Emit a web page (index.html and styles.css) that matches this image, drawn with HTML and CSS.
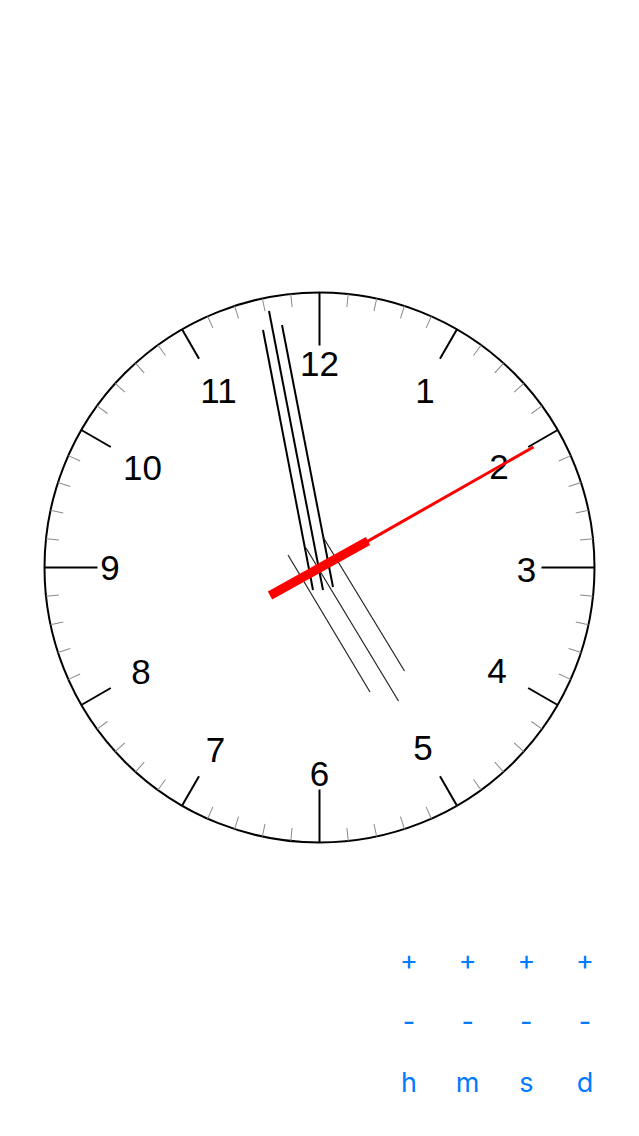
FILE: index.html
```html
<!DOCTYPE html>
<html>
<head>
<meta charset="utf-8">
<link rel="stylesheet" href="styles.css">
</head>
<body>
<div class="page">
  <svg class="clock" width="639" height="930" viewBox="0 0 639 930" xmlns="http://www.w3.org/2000/svg" xmlns:xlink="http://www.w3.org/1999/xlink">
    <defs>
      <line id="mt" class="minor" x1="319.5" y1="292.5" x2="319.5" y2="305.5"/>
      <line id="ht" class="hour" x1="319.5" y1="292.5" x2="319.5" y2="326.5"/>
      <line id="qt" class="hour" x1="319.5" y1="292.5" x2="319.5" y2="345.5"/>
    </defs>
    <circle class="rim" cx="319.5" cy="567.5" r="275"/>
    <g>
      <use href="#mt" transform="rotate(6 319.5 567.5)"/>
      <use href="#mt" transform="rotate(12 319.5 567.5)"/>
      <use href="#mt" transform="rotate(18 319.5 567.5)"/>
      <use href="#mt" transform="rotate(24 319.5 567.5)"/>
      <use href="#mt" transform="rotate(36 319.5 567.5)"/>
      <use href="#mt" transform="rotate(42 319.5 567.5)"/>
      <use href="#mt" transform="rotate(48 319.5 567.5)"/>
      <use href="#mt" transform="rotate(54 319.5 567.5)"/>
      <use href="#mt" transform="rotate(66 319.5 567.5)"/>
      <use href="#mt" transform="rotate(72 319.5 567.5)"/>
      <use href="#mt" transform="rotate(78 319.5 567.5)"/>
      <use href="#mt" transform="rotate(84 319.5 567.5)"/>
      <use href="#mt" transform="rotate(96 319.5 567.5)"/>
      <use href="#mt" transform="rotate(102 319.5 567.5)"/>
      <use href="#mt" transform="rotate(108 319.5 567.5)"/>
      <use href="#mt" transform="rotate(114 319.5 567.5)"/>
      <use href="#mt" transform="rotate(126 319.5 567.5)"/>
      <use href="#mt" transform="rotate(132 319.5 567.5)"/>
      <use href="#mt" transform="rotate(138 319.5 567.5)"/>
      <use href="#mt" transform="rotate(144 319.5 567.5)"/>
      <use href="#mt" transform="rotate(156 319.5 567.5)"/>
      <use href="#mt" transform="rotate(162 319.5 567.5)"/>
      <use href="#mt" transform="rotate(168 319.5 567.5)"/>
      <use href="#mt" transform="rotate(174 319.5 567.5)"/>
      <use href="#mt" transform="rotate(186 319.5 567.5)"/>
      <use href="#mt" transform="rotate(192 319.5 567.5)"/>
      <use href="#mt" transform="rotate(198 319.5 567.5)"/>
      <use href="#mt" transform="rotate(204 319.5 567.5)"/>
      <use href="#mt" transform="rotate(216 319.5 567.5)"/>
      <use href="#mt" transform="rotate(222 319.5 567.5)"/>
      <use href="#mt" transform="rotate(228 319.5 567.5)"/>
      <use href="#mt" transform="rotate(234 319.5 567.5)"/>
      <use href="#mt" transform="rotate(246 319.5 567.5)"/>
      <use href="#mt" transform="rotate(252 319.5 567.5)"/>
      <use href="#mt" transform="rotate(258 319.5 567.5)"/>
      <use href="#mt" transform="rotate(264 319.5 567.5)"/>
      <use href="#mt" transform="rotate(276 319.5 567.5)"/>
      <use href="#mt" transform="rotate(282 319.5 567.5)"/>
      <use href="#mt" transform="rotate(288 319.5 567.5)"/>
      <use href="#mt" transform="rotate(294 319.5 567.5)"/>
      <use href="#mt" transform="rotate(306 319.5 567.5)"/>
      <use href="#mt" transform="rotate(312 319.5 567.5)"/>
      <use href="#mt" transform="rotate(318 319.5 567.5)"/>
      <use href="#mt" transform="rotate(324 319.5 567.5)"/>
      <use href="#mt" transform="rotate(336 319.5 567.5)"/>
      <use href="#mt" transform="rotate(342 319.5 567.5)"/>
      <use href="#mt" transform="rotate(348 319.5 567.5)"/>
      <use href="#mt" transform="rotate(354 319.5 567.5)"/>
    </g>
    <g>
      <use href="#qt"/>
      <use href="#ht" transform="rotate(30 319.5 567.5)"/>
      <use href="#ht" transform="rotate(60 319.5 567.5)"/>
      <use href="#qt" transform="rotate(90 319.5 567.5)"/>
      <use href="#ht" transform="rotate(120 319.5 567.5)"/>
      <use href="#ht" transform="rotate(150 319.5 567.5)"/>
      <use href="#qt" transform="rotate(180 319.5 567.5)"/>
      <use href="#ht" transform="rotate(210 319.5 567.5)"/>
      <use href="#ht" transform="rotate(240 319.5 567.5)"/>
      <use href="#qt" transform="rotate(270 319.5 567.5)"/>
      <use href="#ht" transform="rotate(300 319.5 567.5)"/>
      <use href="#ht" transform="rotate(330 319.5 567.5)"/>
    </g>
    <g class="nums">
      <text x="319.5" y="375.5">12</text>
      <text x="425" y="402.5">1</text>
      <text x="499" y="478.5">2</text>
      <text x="526.5" y="581.5">3</text>
      <text x="497" y="682.5">4</text>
      <text x="423" y="759.5">5</text>
      <text x="319.5" y="786">6</text>
      <text x="215.5" y="761.5">7</text>
      <text x="141" y="683.5">8</text>
      <text x="110" y="579.5">9</text>
      <text x="142.5" y="479.5">10</text>
      <text x="218.5" y="402.5">11</text>
    </g>
    <g>
      <line class="hand" x1="263" y1="330" x2="313" y2="590"/>
      <line class="hand" x1="269" y1="311" x2="323" y2="590"/>
      <line class="hand" x1="282" y1="325" x2="333" y2="587"/>
      <line class="thin" x1="288" y1="555" x2="370" y2="692"/>
      <line class="thin" x1="306" y1="548" x2="398.5" y2="701"/>
      <line class="thin" x1="323" y1="537" x2="404.5" y2="671"/>
      <line class="sec-thick" x1="270" y1="595.5" x2="368" y2="541"/>
      <line class="sec-thin" x1="367" y1="541.6" x2="533.5" y2="447"/>
    </g>
  </svg>
  <div class="controls">
    <button class="btn">+</button>
    <button class="btn">+</button>
    <button class="btn">+</button>
    <button class="btn">+</button>
    <button class="btn">-</button>
    <button class="btn">-</button>
    <button class="btn">-</button>
    <button class="btn">-</button>
    <button class="btn">h</button>
    <button class="btn">m</button>
    <button class="btn">s</button>
    <button class="btn">d</button>
  </div>
</div>
</body>
</html>
```

FILE: styles.css
```css
html, body {
  margin: 0;
  padding: 0;
  background: #ffffff;
}

.page {
  width: 639px;
  height: 1136px;
  overflow: hidden;
}

.clock {
  display: block;
}

.rim {
  fill: none;
  stroke: #000;
  stroke-width: 2;
}

.minor {
  stroke: #8a8a8a;
  stroke-width: 1;
}

.hour {
  stroke: #000;
  stroke-width: 2;
}

.nums text {
  font-family: "Liberation Sans", Arial, sans-serif;
  font-size: 35px;
  fill: #000;
  text-anchor: middle;
}

.hand {
  stroke: #000;
  stroke-width: 2;
}

.thin {
  stroke: #222;
  stroke-width: 1.2;
}

.sec-thick {
  stroke: #ff0000;
  stroke-width: 9;
}

.sec-thin {
  stroke: #ff0000;
  stroke-width: 3;
}

.controls {
  display: grid;
  grid-template-columns: repeat(4, 58.67px);
  grid-auto-rows: 61px;
  justify-content: end;
  padding-right: 24.7px;
}

.btn {
  appearance: none;
  border: none;
  background: transparent;
  padding: 0;
  margin: 0;
  color: #007aff;
  font-family: "Inter", "Liberation Sans", sans-serif;
  font-size: 27px;
  line-height: 1;
  display: flex;
  align-items: center;
  justify-content: center;
}
```
